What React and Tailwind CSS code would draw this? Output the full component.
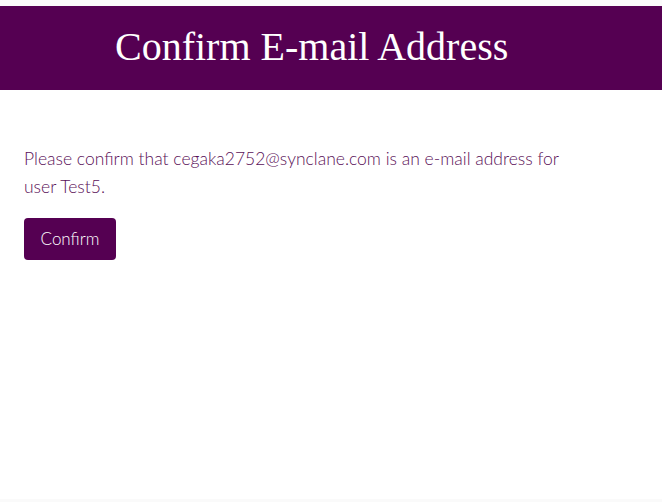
export default function App() {
  return (
    <div className="min-h-[502px] w-full bg-[#fafafa] flex flex-col">
      <div className="h-[6px]" />
      <div className="bg-white flex-1 flex flex-col">
        <header className="bg-[#550052] h-[84px] flex items-center pl-[115px]">
          <h1 className="text-white text-[40px] leading-none font-['Liberation_Serif',serif] pb-[2px]">
            Confirm E-mail Address
          </h1>
        </header>
        <main className="px-6 pt-[55px] font-['Lato',sans-serif] font-light">
          <p className="text-[#5a1058] text-[17.5px] leading-[28px] max-w-[560px]">
            Please confirm that cegaka2752@synclane.com is an e-mail address for user Test5.
          </p>
          <button className="mt-[17px] bg-[#550052] text-white rounded-[4px] h-[42px] w-[92px] text-[17px] font-light">
            Confirm
          </button>
        </main>
      </div>
      <div className="h-[3px]" />
    </div>
  );
}
